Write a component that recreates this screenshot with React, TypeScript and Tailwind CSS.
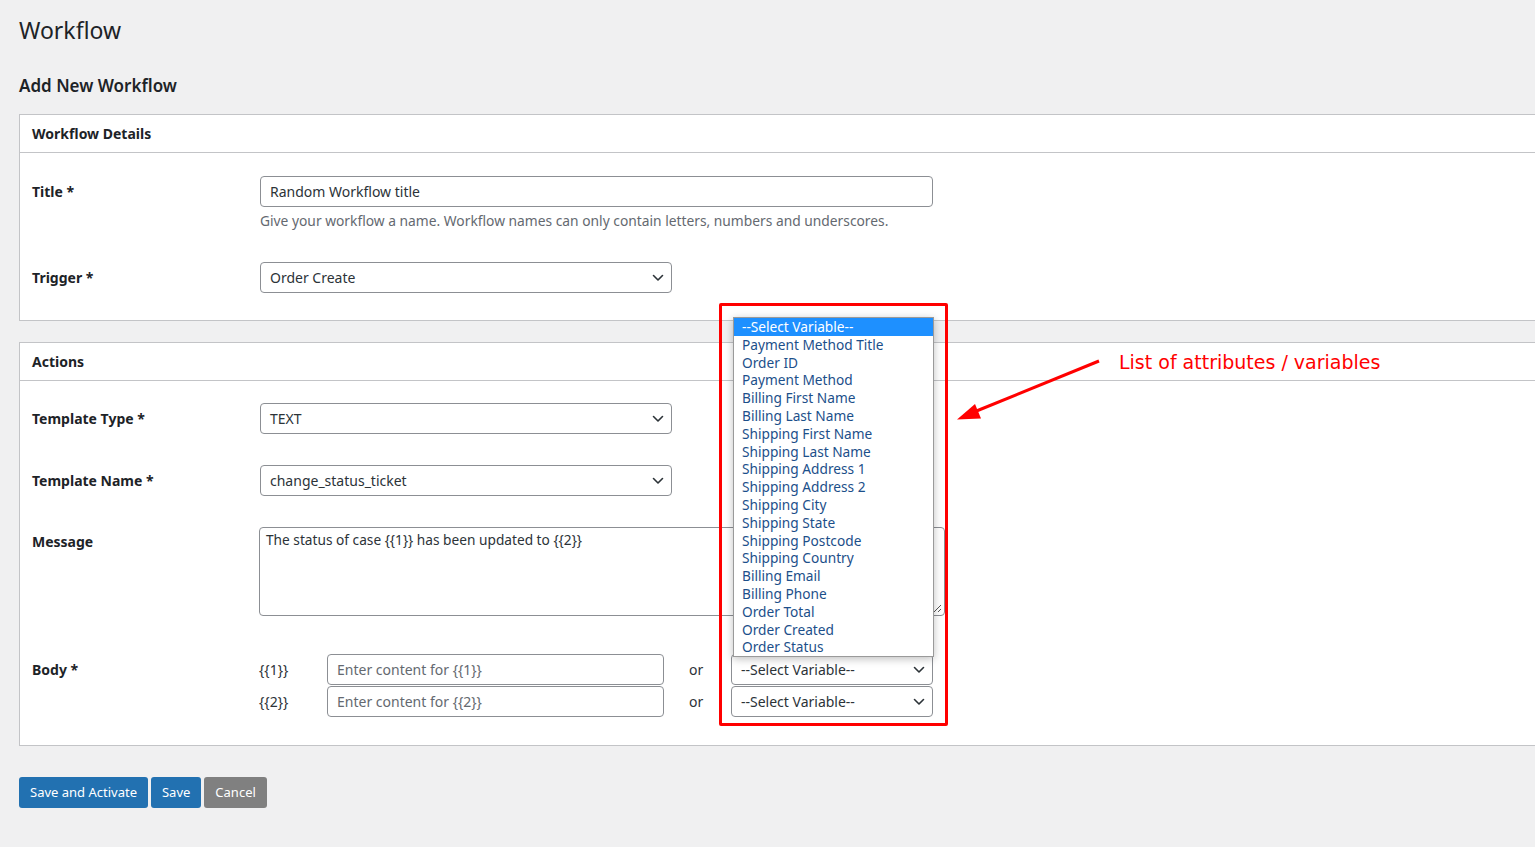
import React from "react";

const Chevron = () => (
  <svg width="12" height="8" viewBox="0 0 12 8" fill="none" className="shrink-0">
    <path d="M1.5 1.5 L6 6 L10.5 1.5" stroke="#2c3338" strokeWidth="1.6" strokeLinecap="round" strokeLinejoin="round" />
  </svg>
);

const Select = ({ value, w }: { value: string; w: string }) => (
  <div className={`${w} h-[31px] border border-[#8c8f94] rounded-[4px] bg-white flex items-center justify-between pl-[9px] pr-[7px] text-[14px] text-[#2c3338]`}>
    <span>{value}</span>
    <Chevron />
  </div>
);

const variables = [
  "Payment Method Title",
  "Order ID",
  "Payment Method",
  "Billing First Name",
  "Billing Last Name",
  "Shipping First Name",
  "Shipping Last Name",
  "Shipping Address 1",
  "Shipping Address 2",
  "Shipping City",
  "Shipping State",
  "Shipping Postcode",
  "Shipping Country",
  "Billing Email",
  "Billing Phone",
  "Order Total",
  "Order Created",
  "Order Status",
];

export default function App() {
  return (
    <div
      className="relative min-h-[847px] bg-[#f0f0f1] text-[#1d2327] overflow-hidden"
      style={{ fontFamily: '"Noto Sans", "Open Sans", sans-serif' }}
    >
      <div className="pl-[19px] pt-[14px] pb-[39px]">
        <h1 className="text-[23px] leading-[32px] font-normal text-[#1d2327]">Workflow</h1>
        <h2 className="mt-[28px] text-[17px] leading-[24px] font-semibold">Add New Workflow</h2>

        {/* Panel 1 */}
        <div className="mt-[16px] bg-white border-y border-l border-[#c3c4c7] w-[1540px]">
          <div className="h-[38px] border-b border-[#c3c4c7] flex items-center pl-[12px] text-[14px] font-bold">
            Workflow Details
          </div>
          <div className="pl-[12px] pt-[23px] pb-[27px]">
            <div className="flex">
              <div className="w-[228px] h-[31px] flex items-center text-[14px] font-bold">Title *</div>
              <div>
                <div className="w-[673px] h-[31px] border border-[#8c8f94] rounded-[4px] flex items-center pl-[9px] text-[14px] text-[#2c3338]">
                  Random Workflow title
                </div>
                <div className="mt-[5px] text-[13.8px] leading-[18px] text-[#646970]">
                  Give your workflow a name. Workflow names can only contain letters, numbers and underscores.
                </div>
              </div>
            </div>
            <div className="flex mt-[32px]">
              <div className="w-[228px] h-[31px] flex items-center text-[14px] font-bold">Trigger *</div>
              <Select value="Order Create" w="w-[412px]" />
            </div>
          </div>
        </div>

        {/* Panel 2 */}
        <div className="mt-[21px] bg-white border-y border-l border-[#c3c4c7] w-[1540px]">
          <div className="h-[38px] border-b border-[#c3c4c7] flex items-center pl-[12px] text-[14px] font-bold">
            Actions
          </div>
          <div className="pl-[12px] pt-[22px] pb-[28px]">
            <div className="flex">
              <div className="w-[228px] h-[31px] flex items-center text-[14px] font-bold">Template Type *</div>
              <Select value="TEXT" w="w-[412px]" />
            </div>
            <div className="flex mt-[31px]">
              <div className="w-[228px] h-[31px] flex items-center text-[14px] font-bold">Template Name *</div>
              <Select value="change_status_ticket" w="w-[412px]" />
            </div>
            <div className="flex mt-[31px]">
              <div className="w-[227px] pt-[6px] text-[14px] font-bold leading-[18px]">Message</div>
              <div className="relative w-[686px] h-[89px] border border-[#8c8f94] rounded-[4px] px-[6px] pt-[2px] text-[13.7px] leading-[20px] text-[#2c3338]">
                The status of case {"{{1}}"} has been updated to {"{{2}}"}
                <svg className="absolute right-[2px] bottom-[2px]" width="10" height="10" viewBox="0 0 10 10">
                  <path d="M9 2 L2 9 M9 6 L6 9" stroke="#555" strokeWidth="1" />
                </svg>
              </div>
            </div>
            <div className="flex mt-[38px]">
              <div className="w-[227px] h-[31px] flex items-center text-[14px] font-bold">Body *</div>
              <div className="flex flex-col gap-[1px]">
                {["{{1}}", "{{2}}"].map((v) => (
                  <div key={v} className="flex items-center">
                    <div className="w-[68px] text-[14px] text-[#2c3338]">{v}</div>
                    <div className="w-[337px] h-[31px] border border-[#8c8f94] rounded-[4px] flex items-center pl-[9px] text-[14px] text-[#646970]">
                      Enter content for {v}
                    </div>
                    <div className="w-[67px] pl-[25px] text-[14px] text-[#2c3338]">or</div>
                    <Select value="--Select Variable--" w="w-[202px]" />
                  </div>
                ))}
              </div>
            </div>
          </div>
        </div>

        {/* Buttons */}
        <div className="mt-[31px] flex gap-[3px]">
          <button className="h-[31px] px-[11px] rounded-[3px] bg-[#2271b1] text-white text-[13px]">Save and Activate</button>
          <button className="h-[31px] px-[11px] rounded-[3px] bg-[#2271b1] text-white text-[13px]">Save</button>
          <button className="h-[31px] px-[11px] rounded-[3px] bg-[#808080] text-white text-[13px]">Cancel</button>
        </div>
      </div>

      {/* Open dropdown listbox */}
      <div className="absolute left-[733px] top-[317px] w-[201px] bg-white border border-[#9a9a9a] shadow-[0_2px_8px_rgba(0,0,0,0.25)] text-[13.7px]">
        <div className="bg-[#1e90ff] text-white leading-[17.8px] pl-[8px]">--Select Variable--</div>
        {variables.map((v) => (
          <div key={v} className="leading-[17.8px] pl-[8px] text-[#1c4f8a]">{v}</div>
        ))}
      </div>

      {/* Red annotation box */}
      <div className="absolute left-[719px] top-[303px] w-[229px] h-[423px] border-[3px] border-[#ff0000] rounded-[2px] pointer-events-none" />

      {/* Arrow */}
      <svg className="absolute left-0 top-0 pointer-events-none" width="1535" height="847">
        <line x1="1099" y1="361" x2="974" y2="412" stroke="#ff0000" strokeWidth="3" />
        <polygon points="957,419.5 975,404 981,418.5" fill="#ff0000" />
      </svg>
      <div
        className="absolute left-[1119px] top-[349px] text-[19px] leading-[26px] text-[#ff0000]"
        style={{ fontFamily: '"DejaVu Sans", sans-serif' }}
      >
        List of attributes / variables
      </div>
    </div>
  );
}
